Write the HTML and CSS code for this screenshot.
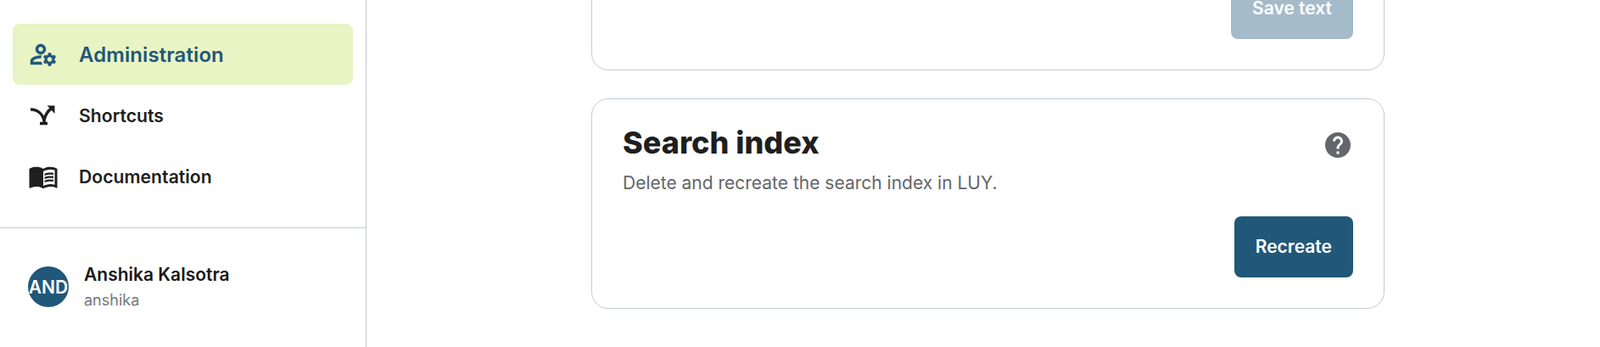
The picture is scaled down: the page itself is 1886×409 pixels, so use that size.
FILE: index.html
```html
<!DOCTYPE html>
<html lang="en">
<head>
    <meta charset="UTF-8">
    <meta name="viewport" content="width=device-width, initial-scale=1.0">
    <title>Administration</title>
    <link rel="stylesheet" href="styles.css">
</head>
<body>
    <aside class="sidebar">
        <nav class="nav">
            <a class="nav-item active" href="#">
                <svg class="nav-icon icon-bold" viewBox="0 0 24 24" fill="currentColor"><path d="M4 18v-.65c0-.34.16-.66.41-.81C6.1 15.53 8.03 15 10 15c.03 0 .05 0 .08.01.1-.7.3-1.37.59-1.98-.22-.02-.44-.03-.67-.03-2.42 0-4.68.67-6.61 1.82-.88.52-1.39 1.5-1.39 2.53V20h9.26c-.42-.6-.75-1.28-.97-2H4zM10 12c2.21 0 4-1.79 4-4s-1.79-4-4-4-4 1.79-4 4 1.79 4 4 4zm0-6c1.1 0 2 .9 2 2s-.9 2-2 2-2-.9-2-2 .9-2 2-2zM20.75 16c0-.22-.03-.42-.06-.63l1.14-1.01-1-1.73-1.45.49c-.32-.27-.68-.48-1.08-.63L18 11h-2l-.3 1.49c-.4.15-.76.36-1.08.63l-1.45-.49-1 1.73 1.14 1.01c-.03.21-.06.41-.06.63s.03.42.06.63l-1.14 1.01 1 1.73 1.45-.49c.32.27.68.48 1.08.63L16 21h2l.3-1.49c.4-.15.76-.36 1.08-.63l1.45.49 1-1.73-1.14-1.01c.03-.21.06-.41.06-.63zM17 18c-1.1 0-2-.9-2-2s.9-2 2-2 2 .9 2 2-.9 2-2 2z"/></svg>
                <span>Administration</span>
            </a>
            <a class="nav-item" href="#">
                <svg class="nav-icon" viewBox="0 0 36 36" fill="none" stroke="currentColor" stroke-width="3.5"><path d="M3 11c8 0 14 5 16 13v3"/><path d="M19 24c1-6 5-12 10-15"/><path d="M14 27.5h9"/><path d="M22.5 6.5h9V16z" fill="currentColor" stroke="none"/></svg>
                <span>Shortcuts</span>
            </a>
            <a class="nav-item" href="#">
                <svg class="nav-icon" viewBox="0 0 24 24" fill="currentColor"><path d="M21 5c-1.11-.35-2.33-.5-3.5-.5-1.95 0-4.05.4-5.5 1.5-1.45-1.1-3.55-1.5-5.5-1.5S2.45 4.9 1 6v14.65c0 .25.25.5.5.5.1 0 .15-.05.25-.05C3.1 20.45 5.05 20 6.5 20c1.95 0 4.05.4 5.5 1.5 1.35-.85 3.8-1.5 5.5-1.5 1.65 0 3.35.3 4.75 1.05.1.05.15.05.25.05.25 0 .5-.25.5-.5V6c-.6-.45-1.25-.75-2-1zm0 13.5c-1.1-.35-2.3-.5-3.5-.5-1.7 0-4.15.65-5.5 1.5V8c1.35-.85 3.8-1.5 5.5-1.5 1.2 0 2.4.15 3.5.5v11.5z"/><path d="M17.5 10.5c.88 0 1.73.09 2.5.26V9.24c-.79-.15-1.64-.24-2.5-.24-1.7 0-3.24.29-4.5.83v1.66c1.13-.64 2.7-.99 4.5-.99zM13 12.49v1.66c1.13-.64 2.7-.99 4.5-.99.88 0 1.73.09 2.5.26V11.9c-.79-.15-1.64-.24-2.5-.24-1.7 0-3.24.3-4.5.83zM17.5 14.33c-1.7 0-3.24.29-4.5.83v1.66c1.13-.64 2.7-.99 4.5-.99.88 0 1.73.09 2.5.26v-1.52c-.79-.16-1.64-.24-2.5-.24z"/></svg>
                <span>Documentation</span>
            </a>
        </nav>
        <div class="user">
            <div class="avatar">AND</div>
            <div class="user-info">
                <div class="user-name">Anshika Kalsotra</div>
                <div class="user-login">anshika</div>
            </div>
        </div>
    </aside>

    <main class="main">
        <section class="card card-scrolled">
            <div class="card-actions">
                <button class="btn btn-disabled" type="button">Save text</button>
            </div>
        </section>
        <section class="card">
            <div class="card-head">
                <h2>Search index</h2>
                <svg class="help-icon" viewBox="2 2 20 20" fill="currentColor"><path d="M12 2C6.48 2 2 6.48 2 12s4.48 10 10 10 10-4.48 10-10S17.52 2 12 2zm1 17h-2v-2h2v2zm2.07-7.75l-.9.92C13.45 12.9 13 13.5 13 15h-2v-.5c0-1.1.45-2.1 1.17-2.83l1.24-1.26c.37-.36.59-.86.59-1.41 0-1.1-.9-2-2-2s-2 .9-2 2H8c0-2.21 1.79-4 4-4s4 1.79 4 4c0 .88-.36 1.68-.93 2.25z"/></svg>
            </div>
            <p class="card-text">Delete and recreate the search index in LUY.</p>
            <div class="card-actions">
                <button class="btn" type="button">Recreate</button>
            </div>
        </section>
    </main>
</body>
</html>
```

FILE: styles.css
```css
html, body {
    height: 100%;
    margin: 0;
    padding: 0;
    overflow: hidden;
}
body {
    display: flex;
    font-family: 'Inter', sans-serif;
    background: #ffffff;
    color: #1f1f1f;
}
.sidebar {
    width: 431px;
    flex-shrink: 0;
    border-right: 1px solid #c4cbd3;
}
.nav {
    display: flex;
    flex-direction: column;
    padding: 28px 15px 24px;
    border-bottom: 1px solid #c4cbd3;
}
.nav-item {
    display: flex;
    align-items: center;
    gap: 24px;
    height: 72px;
    padding-left: 18px;
    border-radius: 8px;
    color: #1f1f1f;
    font-size: 21.2px;
    font-weight: 600;
    text-decoration: none;
}
.nav-item.active {
    background: #e8f4c4;
    color: #215778;
    font-size: 24px;
    letter-spacing: 0.08px;
}
.nav-icon {
    width: 36px;
    height: 36px;
    flex-shrink: 0;
}
.icon-bold {
    stroke: currentColor;
    stroke-width: 0.35;
}
.user {
    display: flex;
    align-items: center;
    gap: 18px;
    padding: 41px 33px;
}
.avatar {
    width: 48px;
    height: 48px;
    flex-shrink: 0;
    display: flex;
    align-items: center;
    justify-content: center;
    overflow: hidden;
    border-radius: 50%;
    background: #215778;
    color: #ffffff;
    font-size: 21px;
    font-weight: 600;
}
.user-name {
    font-size: 21px;
    font-weight: 600;
    line-height: 28px;
    color: #1a1a1a;
}
.user-login {
    margin-top: 4px;
    font-size: 18px;
    line-height: 24px;
    color: #75787d;
}
.main {
    flex: 1;
    min-width: 0;
    padding: 0 254px 0 265px;
}
.card {
    padding: 29px 36px 36px;
    margin-bottom: 34px;
    border: 1px solid #c4cbd3;
    border-radius: 20px;
}
/* page is scrolled, only the bottom of this card is visible */
.card-scrolled {
    margin-top: -89px;
    margin-bottom: 33px;
    padding-top: 62px;
}
.card-head {
    display: flex;
    align-items: center;
    justify-content: space-between;
}
.card-head h2 {
    margin: 0;
    font-size: 36px;
    font-weight: 800;
    line-height: 44px;
    color: #1f1f1f;
}
.help-icon {
    width: 30px;
    height: 30px;
    margin: 6px 3px 0 0;
    color: #63666a;
}
.card-text {
    margin: 12px 0 0;
    font-size: 21px;
    line-height: 28px;
    color: #63666a;
}
.card-actions {
    display: flex;
    justify-content: flex-end;
    margin-top: 25px;
}
.card-scrolled .card-actions {
    margin-top: 0;
}
.btn {
    height: 72px;
    padding: 0 25px 2px;
    border: none;
    border-radius: 8px;
    background: #215778;
    color: #ffffff;
    font-family: 'Inter', sans-serif;
    font-size: 21px;
    font-weight: 600;
    cursor: pointer;
}
.btn-disabled {
    background: #a6bbca;
    cursor: default;
}
```
